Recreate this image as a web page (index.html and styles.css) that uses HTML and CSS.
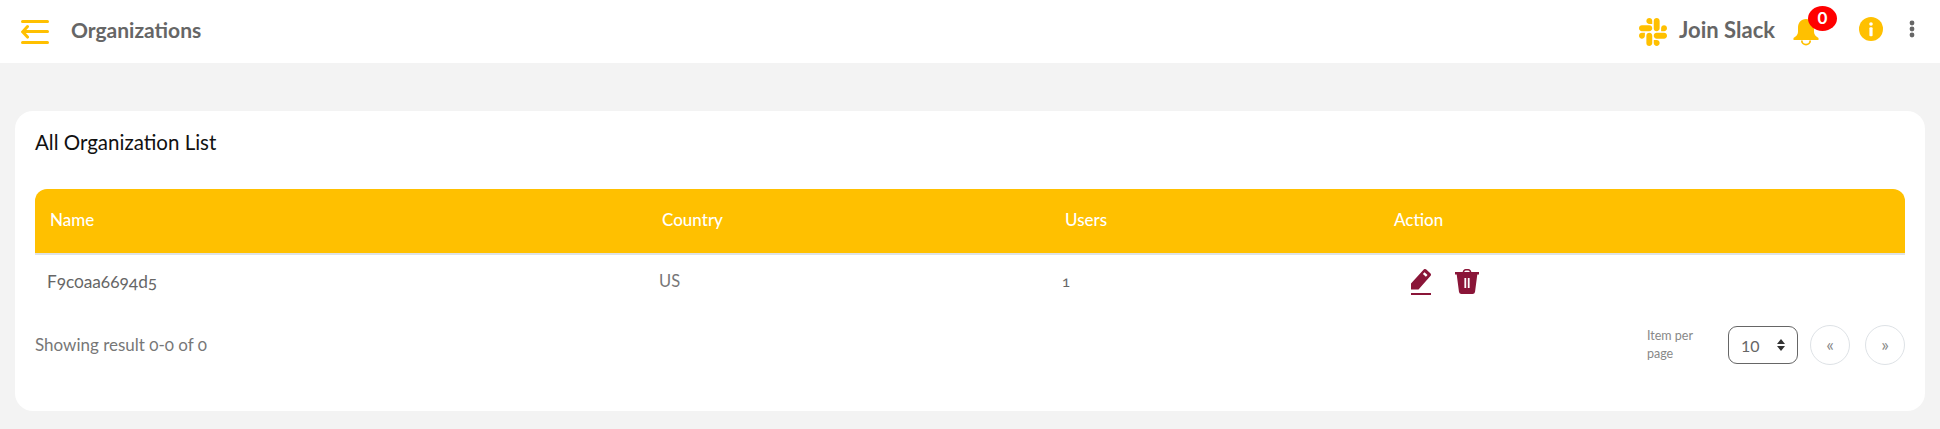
FILE: index.html
```html
<!DOCTYPE html>
<html lang="en">
<head>
<meta charset="utf-8">
<title>Organizations</title>
<link rel="stylesheet" href="styles.css">
</head>
<body>
<header class="topbar">
  <div class="topbar-left">
    <svg class="menu-icon" viewBox="0 0 28 24" width="28" height="24"><path d="M1.500 1.500h25M4 11.500h22.500M1.500 22.500h25" stroke="#ffc000" stroke-width="3" stroke-linecap="round" fill="none"/><path d="M6.500 6.500 1.700 11.800l4.800 5.300" stroke="#ffc000" stroke-width="3" fill="none" stroke-linecap="round"/></svg>
    <h1 class="page-title">Organizations</h1>
  </div>
  <div class="topbar-right">
    <svg class="slack" viewBox="0 0 16 16" width="28" height="28"><path fill="#ffc000" d="M3.362 10.11c0 .926-.756 1.681-1.681 1.681S0 11.036 0 10.111C0 9.186.756 8.43 1.68 8.43h1.682zm.846 0c0-.924.756-1.68 1.681-1.68s1.681.756 1.681 1.68v4.21c0 .924-.756 1.68-1.68 1.68a1.685 1.685 0 0 1-1.682-1.68zM5.890 3.362c-.926 0-1.682-.756-1.682-1.681S4.964 0 5.890 0s1.680.756 1.680 1.680v1.682zm0 .846c.924 0 1.680.756 1.680 1.681S6.814 7.570 5.890 7.570H1.680C.757 7.570 0 6.814 0 5.890c0-.926.756-1.682 1.680-1.682zm6.749 1.682c0-.926.755-1.682 1.680-1.682.925 0 1.681.756 1.681 1.681s-.756 1.681-1.680 1.681h-1.681zm-.848 0c0 .924-.755 1.680-1.680 1.680A1.685 1.685 0 0 1 8.430 5.890V1.680C8.430.757 9.186 0 10.110 0c.926 0 1.681.756 1.681 1.680zm-1.681 6.748c.926 0 1.682.756 1.682 1.681S11.036 16 10.110 16s-1.681-.756-1.681-1.680v-1.682h1.680zm0-.847c-.924 0-1.680-.755-1.680-1.680 0-.925.756-1.681 1.680-1.681h4.210c.924 0 1.680.756 1.680 1.680 0 .926-.756 1.681-1.680 1.681z"/></svg>
    <span class="join">Join Slack</span>
    <div class="bell-wrap">
      <svg class="bell" viewBox="0 0 26 28" width="26" height="28"><path d="M13 1c-5 0-8 3.500-8 9v4c0 2.500-2 4.500-4.500 6v2h25v-2c-2.500-1.500-4.500-3.500-4.500-6v-4c0-5.500-3-9-8-9z" fill="#ffc000"/><path d="M8.800 22.500a4.200 4.200 0 1 0 8.400 0" fill="none" stroke="#ffc000" stroke-width="1.800"/></svg>
      <span class="badge">0</span>
    </div>
    <svg class="info" viewBox="0 0 24 24" width="24" height="24"><circle cx="12" cy="12" r="12" fill="#ffc000"/><circle cx="12" cy="7" r="1.800" fill="#fff"/><rect x="10.400" y="10.200" width="3.200" height="9" rx="1" fill="#fff"/></svg>
    <svg class="dots" viewBox="0 0 6 18" width="6" height="18"><circle cx="3" cy="3" r="2.400" fill="#666"/><circle cx="3" cy="9" r="2.400" fill="#666"/><circle cx="3" cy="15" r="2.400" fill="#666"/></svg>
  </div>
</header>
<main class="content">
  <section class="card">
    <h2 class="card-title">All Organization List</h2>
    <table class="org-table">
      <colgroup><col class="c1"><col class="c2"><col class="c3"><col class="c4"></colgroup>
      <thead>
        <tr><th>Name</th><th>Country</th><th>Users</th><th>Action</th></tr>
      </thead>
      <tbody>
        <tr>
          <td class="name">F9c0aa6694d5</td>
          <td>US</td>
          <td class="users">1</td>
          <td class="actions">
            <svg class="pen" viewBox="0 0 20 26" width="20" height="26"><path d="M0 14.500 12.500.7a2 2 0 0 1 2.800-.1l4 3.700a2 2 0 0 1 .1 2.800L7.500 20.500H0z" fill="#8a1538"/><path d="m13.500 3.200 3 2.800-1.600 1.700-3-2.800z" fill="#fff"/><rect x="0" y="24" width="20" height="2" fill="#8a1538"/></svg>
            <svg class="trash" viewBox="0 0 24 26" width="24" height="26"><path d="M0 3h24v2.400h-1.700L20 23a2.500 2.500 0 0 1-2.500 2h-11A2.500 2.500 0 0 1 4 23L1.700 5.400H0z" fill="#8a1538"/><path d="M8.500 3.500V3a2.200 2.200 0 0 1 2.200-2.200h2.600A2.200 2.200 0 0 1 15.500 3v.5" fill="none" stroke="#8a1538" stroke-width="1.600"/><rect x="9.400" y="9" width="1.800" height="10" fill="#fff"/><rect x="12.800" y="9" width="1.800" height="10" fill="#fff"/></svg>
          </td>
        </tr>
      </tbody>
    </table>
    <div class="table-foot">
      <span class="result">Showing result 0-0 of 0</span>
      <div class="pager">
        <span class="per-page">Item per page</span>
        <div class="select"><span>10</span><svg viewBox="0 0 8 12" width="8" height="12"><path d="M4 0 8 5H0zM4 12 0 7h8z" fill="#333"/></svg></div>
        <button class="page-btn page-prev">«</button>
        <button class="page-btn">»</button>
      </div>
    </div>
  </section>
</main>
</body>
</html>
```
FILE: styles.css
```css
* { box-sizing: border-box; }
html, body { margin: 0; padding: 0; }
body {
  background: #f3f3f3;
  font-family: "Lato", "Liberation Sans", sans-serif;
  font-variant-numeric: oldstyle-nums;
  color: #666;
  height: 429px;
  overflow: hidden;
}
.topbar {
  height: 63px;
  background: #fff;
  display: flex;
  align-items: center;
  justify-content: space-between;
  padding: 0 21px;
}
.topbar-left { display: flex; align-items: center; gap: 22px; }
.page-title { margin: 0; padding-bottom: 4px; font-size: 21px; font-weight: 700; color: #666; }
.topbar-right { display: flex; align-items: center; }
.slack { margin-right: 12px; }
.join { font-size: 22px; font-weight: 700; color: #666; margin-right: 18px; padding-bottom: 4px; }
.bell-wrap { position: relative; width: 26px; height: 28px; margin-right: 40px; }
.bell { display: block; }
.badge {
  position: absolute;
  left: 15px;
  top: -12px;
  width: 29px;
  height: 25px;
  border-radius: 50%;
  background: #f00;
  color: #fff;
  font-size: 17px;
  font-weight: 700;
  font-variant-numeric: lining-nums;
  text-align: center;
  line-height: 23px;
}
.info { margin: 0 26px 5px 0; }
.dots { margin: 0 4px 5px 0; }
.content { padding: 48px 15px 0; }
.card {
  background: #fff;
  border-radius: 18px;
  height: 300px;
  padding: 19px 20px 0;
}
.card-title { margin: 0 0 35px; font-size: 20.500px; font-weight: 400; color: #111; line-height: 24px; }
.org-table { width: 1870px; border-collapse: separate; border-spacing: 0; table-layout: fixed; }
.c1 { width: 612px; }
.c2 { width: 403px; }
.c3 { width: 329px; }
.org-table th {
  height: 66px;
  background: #ffc000;
  border-bottom: 2px solid #dee2e6;
  color: #fff;
  font-size: 17px;
  font-weight: 500;
  text-align: left;
  padding: 0 15px 4px;
}
.org-table th:first-child { border-top-left-radius: 12px; }
.org-table th:last-child { border-top-right-radius: 12px; }
.org-table td { height: 52px; padding: 0 12px; font-size: 16.500px; color: #777; vertical-align: middle; }
.org-table td.name { font-size: 17.300px; color: #666; }
.org-table td.users { font-size: 15px; color: #666; }
.org-table td.actions { padding: 2px 12px 0 32px; }
.actions svg { vertical-align: middle; }
.pen { margin-right: 20px; }
.table-foot { display: flex; align-items: center; justify-content: space-between; margin-top: 18px; }
.result { font-size: 17px; color: #777; padding-bottom: 2px; }
.pager { display: flex; align-items: center; gap: 12px; }
.per-page { width: 69px; font-size: 12.500px; line-height: 18px; color: #888; }
.select {
  width: 70px;
  height: 38px;
  border: 1px solid #666;
  border-radius: 9px;
  display: flex;
  align-items: center;
  justify-content: space-between;
  padding: 0 12px;
  font-size: 16px;
  font-variant-numeric: lining-nums;
  color: #666;
}
.page-btn {
  width: 40px;
  height: 40px;
  border: 1px solid #dee2e6;
  border-radius: 50%;
  background: #fff;
  color: #888;
  font-size: 18px;
  font-family: inherit;
  padding: 0 0 3px;
}
.page-prev { margin-right: 3px; }
```
